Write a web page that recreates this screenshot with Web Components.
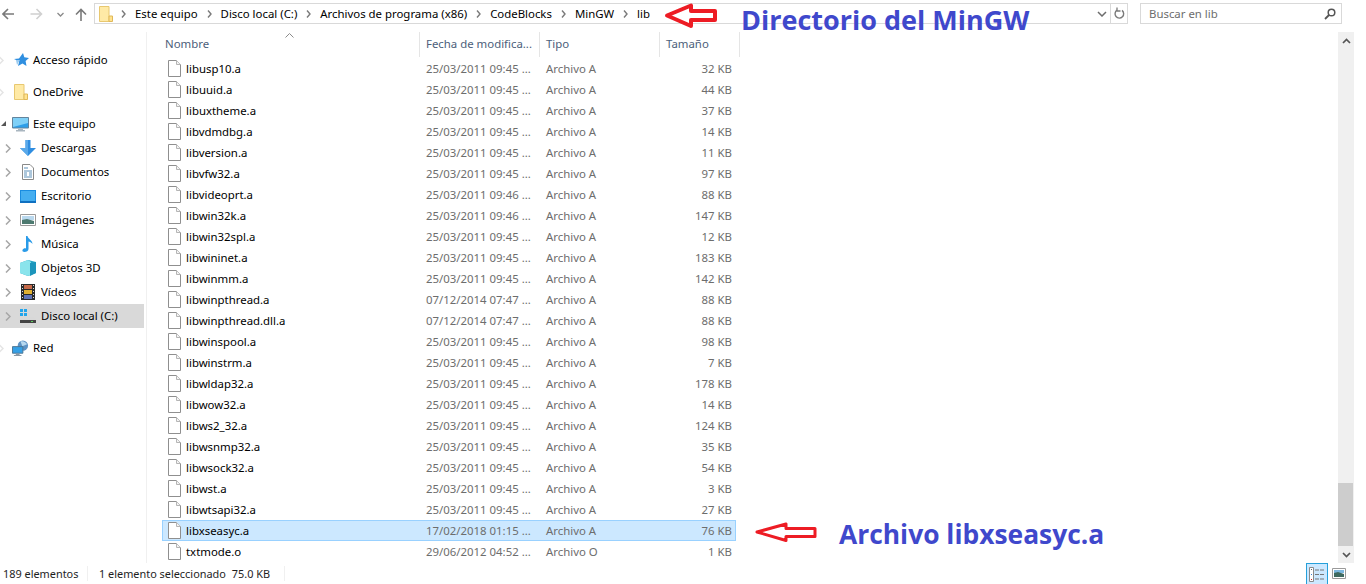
<!DOCTYPE html>
<html lang="es"><head><meta charset="utf-8"><title>lib</title>
<style>
html,body{margin:0;padding:0;background:#fff}
body{width:1366px;height:584px;overflow:hidden;position:relative;font:11.4px/16px "Noto Sans","Open Sans",sans-serif;color:#000}
x-window{width:1354px;height:584px}
</style></head><body>
<x-window>
  <x-toolbar slot="top">
    <x-crumb>Este equipo</x-crumb><x-crumb>Disco local (C:)</x-crumb><x-crumb>Archivos de programa (x86)</x-crumb><x-crumb>CodeBlocks</x-crumb><x-crumb>MinGW</x-crumb><x-crumb>lib</x-crumb>
  </x-toolbar>
  <x-nav-pane slot="nav">
    <x-nav-item level="0" icon="star" arrow="faint">Acceso rápido</x-nav-item>
    <x-nav-item level="0" icon="folder" arrow="faint" gap>OneDrive</x-nav-item>
    <x-nav-item level="0" icon="pc" arrow="open" gap>Este equipo</x-nav-item>
    <x-nav-item level="1" icon="down" arrow="closed">Descargas</x-nav-item>
    <x-nav-item level="1" icon="docs" arrow="closed">Documentos</x-nav-item>
    <x-nav-item level="1" icon="desk" arrow="closed">Escritorio</x-nav-item>
    <x-nav-item level="1" icon="pics" arrow="closed">Imágenes</x-nav-item>
    <x-nav-item level="1" icon="music" arrow="closed">Música</x-nav-item>
    <x-nav-item level="1" icon="cube" arrow="closed">Objetos 3D</x-nav-item>
    <x-nav-item level="1" icon="film" arrow="closed">Vídeos</x-nav-item>
    <x-nav-item level="1" icon="disk" arrow="closed" selected>Disco local (C:)</x-nav-item>
    <x-nav-item level="0" icon="net" arrow="faint" gap>Red</x-nav-item>
  </x-nav-pane>
  <x-file-list slot="list"></x-file-list>
  <x-scrollbar slot="scroll"></x-scrollbar>
  <x-status-bar slot="status"></x-status-bar>
</x-window>
<x-callout style="left:664px;top:2px" w="56" h="28" points="3,13.500 27,3.500 27,9 51,9 51,18 27,18 27,24" sw="4" tx="77" ty="1" size="27">Directorio del MinGW</x-callout>
<x-callout style="left:754px;top:521px" w="66" h="23" points="3,11 32,3 32,7.500 61,7.500 61,15.500 32,15.500 32,19.500" sw="3" tx="85" ty="-4" size="26.400">Archivo libxseasyc.a</x-callout>
<script>
const def=(n,html,init)=>customElements.define(n,class extends HTMLElement{constructor(){super();this.attachShadow({mode:'open'});}
 connectedCallback(){if(!this.shadowRoot.firstChild)this.shadowRoot.innerHTML=typeof html==='function'?html(this):html;if(init)init(this);}});
const ICONS={
 star:'<svg width="16" height="16" viewBox="0 0 16 16"><path d="M10 1l1.300 4.300L16 6l-3.400 3 .9 5-4-2.500-4.500 2.500 1.200-4.500L1 7l5-.6z" fill="#2f8fe0"/><path d="M3 8h4l-3 5z" fill="#9ccbef"/></svg>',
 folder:'<svg width="14" height="16" viewBox="0 0 14 16"><path d="M.5.500h9.500v15H.5z" fill="#ffeaa6" stroke="#e8c870"/><path d="M10 10h3.500v5.500H10z" fill="#ffe38f" stroke="#e0b85a"/></svg>',
 pc:'<svg width="17" height="15" viewBox="0 0 17 15"><path d="M.5.500h16v10.500H.5z" fill="#2e9ee8" stroke="#63849c"/><path d="M1 1h15v5L1 10z" fill="#7fd0f7"/><path d="M6 12h5v1h2v1.500H4V13h2z" fill="#a9b6c0"/></svg>',
 down:'<svg width="16" height="16" viewBox="0 0 16 16"><path d="M5.500 0h5v8H16l-8 8-8-8h5.500z" fill="#2f8de0"/><path d="M5.500 0h2.500v16L0 8h5.500z" fill="#5aa9ea"/></svg>',
 docs:'<svg width="12" height="16" viewBox="0 0 12 16"><path d="M.5.500h7.500l3.500 3.500v11.500H.5z" fill="#fff" stroke="#8a8a8a"/><path d="M2 4h4M2 7h8M2 9h3M7 9h3M2 11h3M7 11h3M2 13h8" stroke="#5a8fb8"/></svg>',
 desk:'<svg width="16" height="13" viewBox="0 0 16 13"><path d="M0 0h16v13H0z" fill="#1a8ce0"/><path d="M1 1h14v10H1z" fill="#45aef0"/><path d="M0 11h16v2H0z" fill="#0f70c0"/></svg>',
 pics:'<svg width="16" height="12" viewBox="0 0 16 12"><path d="M.5.500h15v11H.5z" fill="#fff" stroke="#9a9a9a"/><path d="M2 2h12v4H2z" fill="#b9d8ee"/><path d="M2 6l5-1 7 2v3H2z" fill="#4d7a70"/></svg>',
 music:'<svg width="12" height="16" viewBox="0 0 12 16"><path d="M4 0h1.500c.5 3 5 4 5 8-1-1.500-3-2.500-4-2.500V13c0 2-2 3-4 3-1.500 0-2.500-1-2-2 .5-1.500 2.500-2 3.500-1.500z" fill="#2a9be8"/></svg>',
 cube:'<svg width="16" height="16" viewBox="0 0 16 16"><path d="M8 0l8 2v11l-8 3-8-3V3z" fill="#2aa6c6"/><path d="M0 3l8-3 3 2-1 13-2 1-8-3z" fill="#8ae4ec"/><path d="M10 3l6-1v11l-6 3z" fill="#1c95bb"/></svg>',
 film:'<svg width="14" height="16" viewBox="0 0 14 16"><path d="M0 0h14v16H0z" fill="#2a2a2a"/><path d="M1 1h1v1H1zM1 4h1v1H1zM1 7h1v1H1zM1 10h1v1H1zM1 13h1v1H1zM12 1h1v1h-1zM12 4h1v1h-1zM12 7h1v1h-1zM12 10h1v1h-1zM12 13h1v1h-1z" fill="#ddd"/><path d="M3 1h8v4H3z" fill="#c66a4a"/><path d="M3 6h8v4H3z" fill="#e0b030"/><path d="M3 11h8v4H3z" fill="#5f74b8"/></svg>',
 disk:'<svg width="16" height="16" viewBox="0 0 16 16"><path d="M0 1h3v3H0zM4 1h3v3H4zM0 5h3v3H0zM4 5h3v3H4z" fill="#22a5ec"/><path d="M2 9h12l2 3H0z" fill="#d8d8d8"/><path d="M0 12h16v3H0z" fill="#444"/><path d="M11 13h2v1h-2z" fill="#5fd05f"/></svg>',
 net:'<svg width="18" height="17" viewBox="0 0 18 17"><circle cx="11.500" cy="5.500" r="5.500" fill="#5d92c4"/><path d="M9 1c3-1 6 1 7 3l-5 2z" fill="#b6d8ef"/><path d="M.5 6.500h11v7H.5z" fill="#35a0e6" stroke="#4a7390"/><path d="M4 14h4v1.500h2v1H2v-1h2z" fill="#8a99a5"/></svg>'
};
def('x-window',`<style>:host{display:flex;flex-direction:column}
.m{flex:1;display:flex;min-height:0}
::slotted([slot=list]){flex:1}</style>
<slot name="top"></slot><div class="m"><slot name="nav"></slot><slot name="list"></slot><slot name="scroll"></slot></div><slot name="status"></slot>`);
def('x-crumb',`<style>:host{display:flex;align-items:center;gap:9px;white-space:nowrap}
svg{flex:none}</style><svg width="5" height="8" viewBox="0 0 5 8"><path d="M1 .5L4 4 1 7.500" fill="none" stroke="#7a7a7a" stroke-width="1.400"/></svg><span><slot></slot></span>`);
def('x-toolbar',`<style>:host{display:flex;align-items:flex-start;height:32px;box-sizing:border-box;padding:3px 12px 0 0;color:#000}
.nav{width:94px;height:21px;display:flex;align-items:center;flex:none;box-sizing:border-box;padding-left:2px;padding-top:1px}
.addr{flex:1;height:21px;box-sizing:border-box;border:1px solid #d9d9d9;display:flex;align-items:center;margin-right:12px;padding-left:4px}
.crumbs{display:flex;gap:9px;align-items:center;margin-left:8px;flex:1}
.drop{width:17px;display:flex;justify-content:center;flex:none}
.ref{width:16px;height:19px;border-left:1px solid #d9d9d9;display:flex;align-items:center;justify-content:center;flex:none}
.search{width:202px;height:21px;box-sizing:border-box;border:1px solid #d9d9d9;display:flex;align-items:center;justify-content:space-between;padding:0 5px 0 8px;color:#6d6d6d;flex:none}
</style>
<div class="nav">
<svg width="12" height="12" viewBox="0 0 12 12" style="margin-right:16px"><path d="M12 6H1.500M6 1L1 6l5 5" fill="none" stroke="#7a7a7a" stroke-width="1.600"/></svg>
<svg width="13" height="12" viewBox="0 0 12 12" style="margin-right:14px"><path d="M0 6h10.500M6 1l5 5-5 5" fill="none" stroke="#d0d0d0" stroke-width="1.600"/></svg>
<svg width="7" height="5" viewBox="0 0 7 5" style="margin-right:11px"><path d="M.5 1l3 3 3-3" fill="none" stroke="#8a8a8a" stroke-width="1.300"/></svg>
<svg width="12" height="13" viewBox="0 0 12 13"><path d="M6 13V1.500M1 6.500l5-5 5 5" fill="none" stroke="#7a7a7a" stroke-width="1.600"/></svg>
</div>
<div class="addr">${ICONS.folder}
<div class="crumbs"><slot></slot></div>
<div class="drop"><svg width="10" height="6" viewBox="0 0 10 6"><path d="M1 1l4 4 4-4" fill="none" stroke="#6d6d6d" stroke-width="1.500"/></svg></div>
<div class="ref"><svg width="11" height="13" viewBox="0 0 11 13"><path d="M3 3.200a4.300 4.300 0 1 0 5 .2" fill="none" stroke="#7a7a7a" stroke-width="1.400"/><path d="M3 .5v3.500h3.500" fill="none" stroke="#7a7a7a" stroke-width="1.300"/></svg></div>
</div>
<div class="search"><span>Buscar en lib</span><svg width="12" height="12" viewBox="0 0 12 12"><circle cx="7.500" cy="4.500" r="3.300" fill="none" stroke="#555" stroke-width="1.500"/><path d="M5 7L1 11" stroke="#555" stroke-width="1.800"/></svg></div>`);
def('x-nav-pane',`<style>:host{display:block;width:147px;box-sizing:border-box;border-right:1px solid #f0f0f0;padding:16px 2px 0 0;flex:none}</style><slot></slot>`);
def('x-nav-item',el=>{const l=+el.getAttribute('level'),ar=el.getAttribute('arrow'),ic=ICONS[el.getAttribute('icon')];
 const chev=ar==='open'?'<svg width="7" height="7" viewBox="0 0 7 7"><path d="M6 1v5H1z" fill="#555"/></svg>':
 `<svg width="6" height="9" viewBox="0 0 6 9"><path d="M1 .5l4 4-4 4" fill="none" stroke="${ar==='closed'?'#a6a6a6':'#e4e4e4'}" stroke-width="1.500"/></svg>`;
 return `<style>:host{display:block}
 :host([gap]){margin-top:8px}
 .r{height:24px;display:flex;align-items:center;position:relative;padding-left:${l?41:33}px;white-space:nowrap}
 :host([selected]) .r{background:#d9d9d9}
 .c{position:absolute;left:${l?5:(ar==='open'?0:-2)}px;top:8px;display:flex}
 .i{position:absolute;left:${l?20:12}px;top:0;width:${l?16:17}px;height:24px;display:flex;align-items:center;justify-content:center}
 </style><div class="r"><span class="c">${chev}</span><span class="i">${ic}</span><slot></slot></div>`});
const DOC='<svg width="13" height="17" viewBox="0 0 13 17"><path d="M.5.500h8l4 4v12H.5z" fill="#fff" stroke="#8f8f8f"/><path d="M8.500.500v4h4" fill="#f3f3f3" stroke="#b5b5b5"/></svg>';
def('x-file-row',el=>{const g=k=>el.getAttribute(k);return `<style>:host{display:block}
 .r{height:21px;box-sizing:border-box;width:574px;border:1px solid transparent;display:grid;grid-template-columns:263px 120px 120px 66px;align-items:center;white-space:nowrap;color:#6d6d6d;line-height:15px}
 :host([selected]) .r{background:#cce8ff;border-color:#99d1ff}
 .n{color:#000;display:flex;align-items:center;gap:5px;padding-left:5px}
 .s{text-align:right}
 </style><div class="r"><span class="n">${DOC}<span>${g('name')}</span></span><span>${g('date')}</span><span>${g('type')}</span><span class="s">${g('size')}</span></div>`});
const ROWS=[["libusp10.a","25/03/2011 09:45 ...","32 KB"],["libuuid.a","25/03/2011 09:45 ...","44 KB"],["libuxtheme.a","25/03/2011 09:45 ...","37 KB"],["libvdmdbg.a","25/03/2011 09:45 ...","14 KB"],["libversion.a","25/03/2011 09:45 ...","11 KB"],["libvfw32.a","25/03/2011 09:45 ...","97 KB"],["libvideoprt.a","25/03/2011 09:46 ...","88 KB"],["libwin32k.a","25/03/2011 09:46 ...","147 KB"],["libwin32spl.a","25/03/2011 09:45 ...","12 KB"],["libwininet.a","25/03/2011 09:45 ...","183 KB"],["libwinmm.a","25/03/2011 09:45 ...","142 KB"],["libwinpthread.a","07/12/2014 07:47 ...","88 KB"],["libwinpthread.dll.a","07/12/2014 07:47 ...","88 KB"],["libwinspool.a","25/03/2011 09:45 ...","98 KB"],["libwinstrm.a","25/03/2011 09:45 ...","7 KB"],["libwldap32.a","25/03/2011 09:45 ...","178 KB"],["libwow32.a","25/03/2011 09:45 ...","14 KB"],["libws2_32.a","25/03/2011 09:45 ...","124 KB"],["libwsnmp32.a","25/03/2011 09:45 ...","35 KB"],["libwsock32.a","25/03/2011 09:45 ...","54 KB"],["libwst.a","25/03/2011 09:45 ...","3 KB"],["libwtsapi32.a","25/03/2011 09:45 ...","27 KB"],["libxseasyc.a","17/02/2018 01:15 ...","76 KB"],["txtmode.o","29/06/2012 04:52 ...","1 KB"]];
def('x-file-list',`<style>:host{display:block;min-width:0;position:relative}
 .h{display:grid;grid-template-columns:273px 120px 120px 80px;height:25px;margin-bottom:1px;color:#4c607a;width:593px}
 .h div{border-right:1px solid #e5e5e5;box-sizing:border-box;padding:4px 0 0 6px}
 .h div:first-child{padding-left:18px}
 .sort{position:absolute;left:138px;top:1px}
 .b{padding-left:15px}
 </style><div class="h"><div>Nombre</div><div>Fecha de modifica...</div><div>Tipo</div><div>Tamaño</div></div>
 <svg class="sort" width="9" height="5" viewBox="0 0 9 5"><path d="M.5 4.500l4-4 4 4" fill="none" stroke="#8a8a8a"/></svg>
 <div class="b" id="b"></div>`,el=>{const b=el.shadowRoot.getElementById('b');if(b.children.length)return;for(const[n,d,s]of ROWS){const r=document.createElement('x-file-row');r.setAttribute('name',n);r.setAttribute('date',d);r.setAttribute('type',n.endsWith('.o')?'Archivo O':'Archivo A');r.setAttribute('size',s);if(n==='libxseasyc.a')r.setAttribute('selected','');b.append(r);}});
def('x-scrollbar',`<style>:host{display:flex;flex-direction:column;width:16px;background:#f0f0f0;flex:none}
 .a{height:17px;display:flex;align-items:center;justify-content:center;flex:none}
 .t{flex:1;display:flex;flex-direction:column;justify-content:flex-end}
 .th{height:63px;width:15px;background:#cdcdcd}</style>
 <div class="a"><svg width="9" height="6" viewBox="0 0 9 6"><path d="M1 5l3.500-3.500L8 5" fill="none" stroke="#555" stroke-width="1.700"/></svg></div>
 <div class="t"><div class="th"></div></div>
 <div class="a"><svg width="9" height="6" viewBox="0 0 9 6"><path d="M1 1l3.500 3.500L8 1" fill="none" stroke="#555" stroke-width="1.700"/></svg></div>`);
def('x-status-bar',`<style>:host{display:flex;align-items:center;height:21px;color:#1e1e1e;white-space:nowrap;font-size:10.900px}
 .a{width:88px;padding-left:3px;box-sizing:border-box;border-right:1px solid #f0f0f0;height:15px;line-height:15px}
 .b{width:197px;padding-left:11px;box-sizing:border-box;border-right:1px solid #f0f0f0;height:15px;line-height:15px;display:flex;gap:6px}
 .v{margin-left:auto;display:flex;align-items:center;height:21px;padding-right:8px;gap:4px}
 .d{width:22px;height:21px;box-sizing:border-box;border:1px solid #26a0da;border-bottom:0;background:#cce8ff;display:flex;align-items:center;justify-content:center}
 </style><div class="a">189 elementos</div><div class="b"><span>1 elemento seleccionado</span><span>75.0 KB</span></div>
 <div class="v"><div class="d"><svg width="16" height="15" viewBox="0 0 16 15"><path d="M.5.500h4v14h-4z" fill="#fff" stroke="#8a8a8a"/><path d="M2 2h1v1H2z" fill="#666"/><path d="M2 7h1v1H2z" fill="#3a7fd0"/><path d="M2 12h1v1H2z" fill="#d02020"/><path d="M6 3h4M11 3h4M6 7.500h4M11 7.500h4M6 12h4M11 12h4" stroke="#777"/></svg></div>
 <svg width="14" height="11" viewBox="0 0 14 11"><path d="M.5.500h13v10H.5z" fill="#fff" stroke="#9a9a9a"/><path d="M2 2h10v3H2z" fill="#7cb8e0"/><path d="M2 5l4-1 6 2v3H2z" fill="#3f6a60"/></svg></div>`);
def('x-callout',el=>{const g=k=>el.getAttribute(k);return `<style>:host{display:block;position:absolute;white-space:nowrap}
 svg{display:block}
 .t{position:absolute;left:${g('tx')}px;top:${g('ty')}px;font:700 ${g('size')}px/34px "Open Sans","Noto Sans",sans-serif;color:#3f48cc}
 </style><svg width="${g('w')}" height="${g('h')}" viewBox="0 0 ${g('w')} ${g('h')}"><polygon points="${g('points')}" fill="#fff" stroke="#ed1c24" stroke-width="${g('sw')}" stroke-linejoin="round"/></svg><div class="t"><slot></slot></div>`});
</script>
</body></html>
